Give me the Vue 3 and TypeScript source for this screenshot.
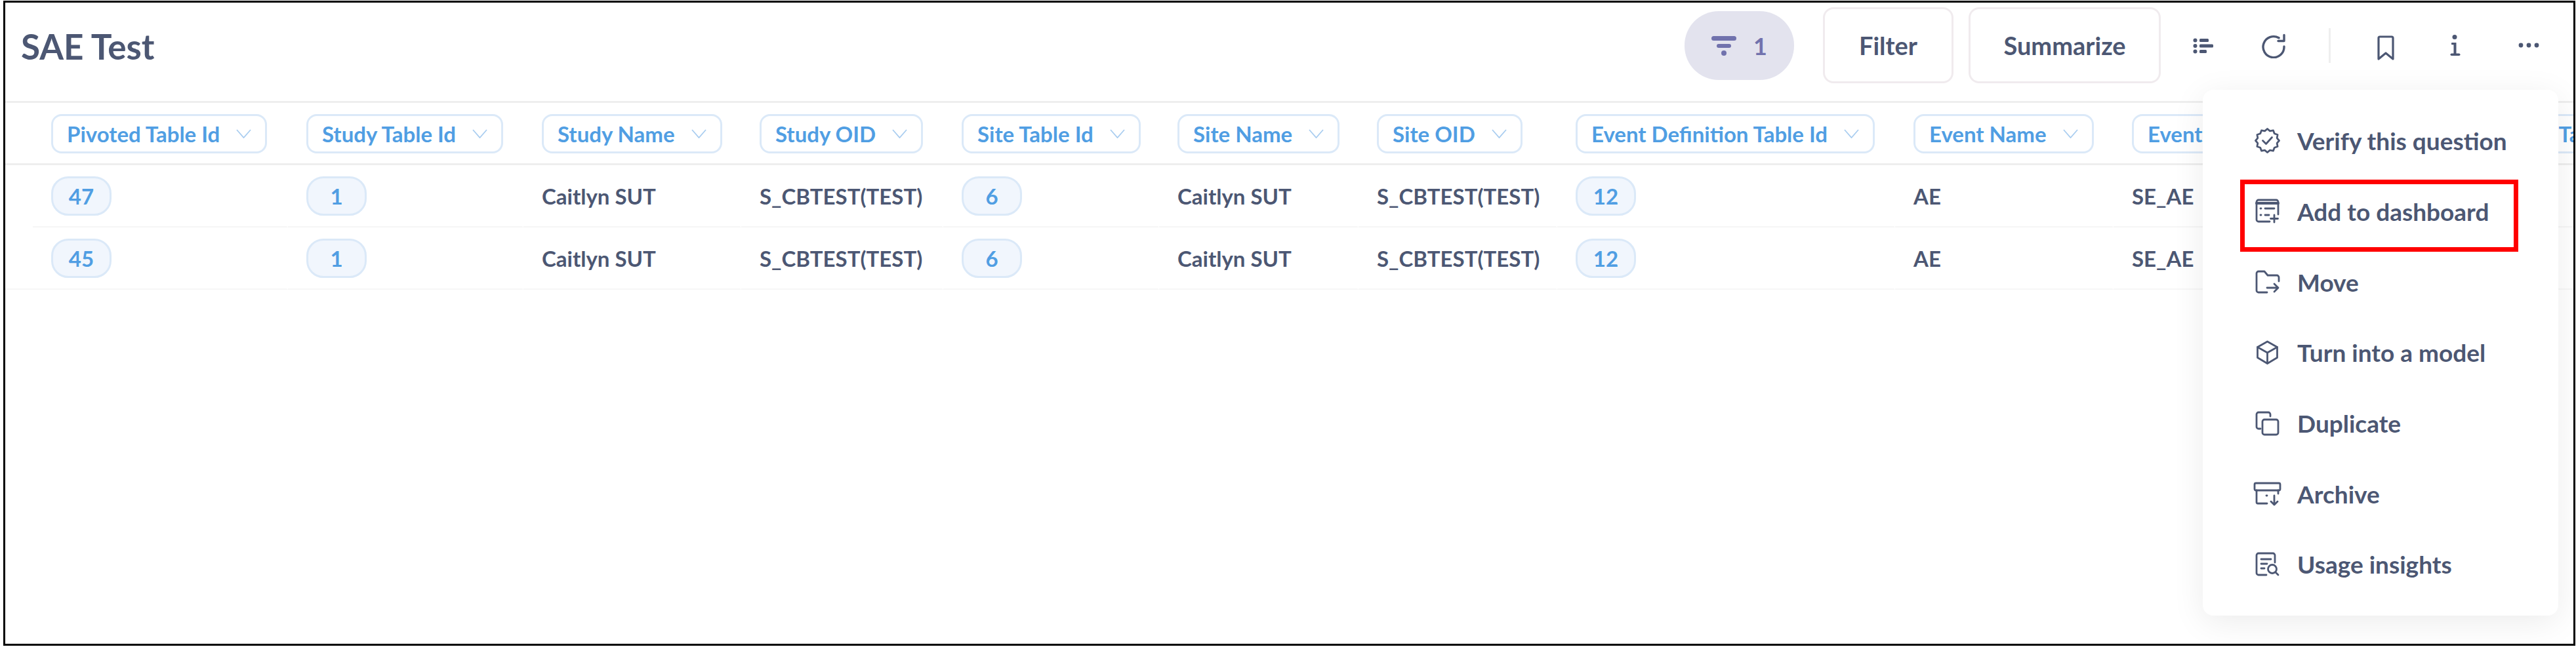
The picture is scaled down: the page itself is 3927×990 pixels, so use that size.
<script setup lang="ts">
interface Column {
  label: string
  tail?: string
  width: number
  kind: 'pk' | 'text'
  values: string[]
}

const columns: Column[] = [
  { label: 'Pivoted Table Id', width: 389, kind: 'pk', values: ['47', '45'] },
  { label: 'Study Table Id', width: 359, kind: 'pk', values: ['1', '1'] },
  { label: 'Study Name', width: 332, kind: 'text', values: ['Caitlyn SUT', 'Caitlyn SUT'] },
  { label: 'Study OID', width: 308, kind: 'text', values: ['S_CBTEST(TEST)', 'S_CBTEST(TEST)'] },
  { label: 'Site Table Id', width: 329, kind: 'pk', values: ['6', '6'] },
  { label: 'Site Name', width: 304, kind: 'text', values: ['Caitlyn SUT', 'Caitlyn SUT'] },
  { label: 'Site OID', width: 303, kind: 'text', values: ['S_CBTEST(TEST)', 'S_CBTEST(TEST)'] },
  { label: 'Event Definition Table Id', width: 515, kind: 'pk', values: ['12', '12'] },
  { label: 'Event Name', width: 333, kind: 'text', values: ['AE', 'AE'] },
  // the middle of this label sits behind the menu, only its two ends show
  { label: 'Event', tail: 'Table Id', width: 800, kind: 'text', values: ['SE_AE', 'SE_AE'] }
]

const rows = [0, 1]

const menuItems = [
  { label: 'Verify this question', icon: 'verify' },
  { label: 'Add to dashboard', icon: 'add' },
  { label: 'Move', icon: 'move' },
  { label: 'Turn into a model', icon: 'model' },
  { label: 'Duplicate', icon: 'duplicate' },
  { label: 'Archive', icon: 'archive' },
  { label: 'Usage insights', icon: 'insights' }
]

// scalloped outline of the verified badge
function badgePath(): string {
  const points: string[] = []
  for (let i = 0; i < 24; i++) {
    const r = i % 2 === 0 ? 18 : 15.2
    const a = (i * Math.PI) / 12
    points.push(`${(18.5 + r * Math.sin(a)).toFixed(2)} ${(18.5 - r * Math.cos(a)).toFixed(2)}`)
  }
  return `M${points.join('L')}z`
}

const badge = badgePath()
</script>

<template>
  <div class="frame">
    <header class="topbar">
      <h1 class="title">SAE Test</h1>
      <div class="actions">
        <button class="filter-count">
          <svg width="38" height="30" viewBox="0 0 38 30" fill="#7172ad">
            <rect x="0" y="0" width="38" height="7" rx="3.5" />
            <rect x="8" y="12" width="22" height="6" rx="3" />
            <circle cx="19" cy="26" r="4" />
          </svg>
          <span>1</span>
        </button>
        <button class="btn btn-filter">Filter</button>
        <button class="btn btn-summarize">Summarize</button>
        <svg class="tool tool-list" width="32" height="24" viewBox="0 0 32 24" fill="#4c5773">
          <circle cx="3.5" cy="3.5" r="3" />
          <circle cx="3.5" cy="12" r="3" />
          <circle cx="3.5" cy="20.5" r="3" />
          <rect x="10" y="1" width="14" height="5" rx="1.5" />
          <rect x="10" y="9.5" width="21" height="5" rx="1.5" />
          <rect x="10" y="18" width="11" height="5" rx="1.5" />
        </svg>
        <svg class="tool tool-refresh" width="36" height="38" viewBox="0 0 36 38" fill="none" stroke="#4c5773" stroke-width="3.4" stroke-linecap="round" stroke-linejoin="round">
          <path d="M34 20a16 16 0 1 1-8-13.2" />
          <path d="M34 2.5v9h-9" />
        </svg>
        <span class="divider"></span>
        <svg class="tool tool-bookmark" width="26" height="38" viewBox="0 0 26 38" fill="none" stroke="#4c5773" stroke-width="3.2" stroke-linejoin="round">
          <path d="M2 4a2 2 0 0 1 2-2h18a2 2 0 0 1 2 2v32l-11-9-11 9z" />
        </svg>
        <svg class="tool tool-info" width="16" height="33" viewBox="0 0 16 33" fill="#4c5773">
          <circle cx="7" cy="3.5" r="3.5" />
          <rect x="5.5" y="12" width="4" height="18" />
          <rect x="2" y="12" width="6" height="3.2" rx="1" />
          <rect x="0.5" y="28.5" width="15" height="3.6" rx="1.8" />
        </svg>
        <svg class="tool tool-dots" width="32" height="8" viewBox="0 0 32 8" fill="#4c5773">
          <circle cx="4" cy="4" r="3.4" />
          <circle cx="16" cy="4" r="3.4" />
          <circle cx="28" cy="4" r="3.4" />
        </svg>
      </div>
    </header>

    <div class="table">
      <div class="head-row">
        <div class="gutter"></div>
        <div v-for="col in columns" :key="col.label" class="head-cell" :style="{ flexBasis: col.width + 'px' }">
          <div class="head-pill">
            <span>{{ col.label }}</span>
            <span v-if="col.tail" class="head-tail">{{ col.tail }}</span>
            <svg v-else width="23" height="14" viewBox="0 0 23 14" fill="none" stroke="#a9cdf0" stroke-width="1.8">
              <path d="M1 1l10.5 12L22 1" />
            </svg>
          </div>
        </div>
      </div>
      <div v-for="r in rows" :key="r" class="row">
        <div class="gutter" :class="{ lined: r === 1 }"></div>
        <div v-for="col in columns" :key="col.label" class="cell" :style="{ flexBasis: col.width + 'px' }">
          <span v-if="col.kind === 'pk'" class="pk">{{ col.values[r] }}</span>
          <span v-else>{{ col.values[r] }}</span>
        </div>
      </div>
    </div>

    <div class="menu">
      <div v-for="item in menuItems" :key="item.label" class="menu-item">
        <svg class="menu-icon" width="37" height="37" viewBox="0 0 37 37" fill="none" stroke="#4c5773" stroke-width="2.8" stroke-linecap="round" stroke-linejoin="round">
          <template v-if="item.icon === 'verify'">
            <path :d="badge" />
            <path d="M11.5 18.5l5 5 9-10" />
          </template>
          <template v-else-if="item.icon === 'add'">
            <path d="M22 34H5a3 3 0 0 1-3-3V4a3 3 0 0 1 3-3h27a3 3 0 0 1 3 3v19" />
            <path d="M2 6h33" stroke-width="4" />
            <path d="M8 14h1M15 14h14M8 24h1M15 24h6M29 24v11M23.5 29.500h11" />
          </template>
          <template v-else-if="item.icon === 'move'">
            <path d="M18 34H5a3 3 0 0 1-3-3V5a3 3 0 0 1 3-3h9l5 6h14a3 3 0 0 1 3 3v6" />
            <path d="M18 27h17M29 21l6 6-6 6" />
          </template>
          <template v-else-if="item.icon === 'model'">
            <path d="M18.500 2l15 8.500v16l-15 9-15-9v-16z" />
            <path d="M3.500 10.500l15 8.500 15-8.500M18.500 19v16" />
          </template>
          <template v-else-if="item.icon === 'duplicate'">
            <path d="M8 27H5a3 3 0 0 1-3-3V5a3 3 0 0 1 3-3h15a3 3 0 0 1 3 3v3" />
            <rect x="11" y="13" width="24" height="23" rx="3" />
          </template>
          <template v-else-if="item.icon === 'archive'">
            <rect x="-1" y="2" width="39" height="11" rx="2" />
            <path d="M2 13v18a2 2 0 0 0 2 2h14M35 13v5M17 21h1M29 21v14M24 30l5 5 5-5" />
          </template>
          <template v-else-if="item.icon === 'insights'">
            <path d="M17 35H5a3 3 0 0 1-3-3V5a3 3 0 0 1 3-3h22a3 3 0 0 1 3 3v11" />
            <path d="M9 11h15M9 18h9M9 25h5" />
            <circle cx="26" cy="26" r="6.500" />
            <path d="M31 31l4 4" />
          </template>
        </svg>
        <span>{{ item.label }}</span>
      </div>
    </div>
    <div class="highlight"></div>
  </div>
</template>

<style>
html,
body {
  margin: 0;
  background: #fff;
}
</style>

<style scoped>
.frame {
  position: relative;
  box-sizing: border-box;
  width: 3921px;
  height: 984px;
  margin: 1px 0 0 5px;
  overflow: hidden;
  background: #fff;
  border: 3px solid #000;
  font-family: Lato, "Noto Sans", sans-serif;
  font-weight: 700;
  color: #4c5773;
}

.topbar {
  display: flex;
  align-items: flex-start;
  height: 150px;
  border-bottom: 3px solid #eeeeee;
}

.title {
  margin: 37px 0 0 24px;
  font-size: 53px;
  line-height: 60px;
  font-weight: 700;
}

.actions {
  display: flex;
  align-items: flex-start;
  margin-left: auto;
  margin-right: 52px;
}

.filter-count {
  display: flex;
  align-items: center;
  justify-content: center;
  gap: 26px;
  width: 167px;
  height: 105px;
  margin-top: 13px;
  padding: 0;
  border: none;
  border-radius: 52px;
  background: #e3e3ee;
  color: #7172ad;
  font: 700 36px Lato, sans-serif;
}

.btn {
  box-sizing: border-box;
  height: 116px;
  margin-top: 7px;
  padding: 0;
  border: 3px solid #f0ebee;
  border-radius: 16px;
  background: #fff;
  color: #4c5773;
  font: 700 38px Lato, sans-serif;
}

.btn-filter {
  width: 199px;
  margin-left: 44px;
}

.btn-summarize {
  width: 293px;
  margin-left: 23px;
}

.tool {
  flex: none;
}

.tool-list {
  margin: 54px 0 0 49px;
}

.tool-refresh {
  margin: 47px 0 0 73px;
}

.divider {
  width: 3px;
  height: 53px;
  margin: 39px 0 0 66px;
  background: #eeeeee;
}

.tool-bookmark {
  margin: 50px 0 0 71px;
}

.tool-info {
  margin: 49px 0 0 85px;
}

.tool-dots {
  margin: 61px 0 0 88px;
}

.table {
  overflow: hidden;
}

.head-row,
.row {
  display: flex;
}

.gutter {
  flex: none;
  width: 42px;
  border-bottom: 2px solid transparent;
}

.head-row {
  height: 92px;
  border-bottom: 3px solid #eeeeee;
}

.head-cell,
.cell {
  flex: none;
  box-sizing: border-box;
  padding-left: 28px;
}

.head-cell {
  padding-top: 17px;
}

.head-pill {
  display: inline-flex;
  align-items: center;
  gap: 25px;
  box-sizing: border-box;
  height: 60px;
  padding: 0 21px;
  border: 3px solid #dbe9f8;
  border-radius: 16px;
  color: #509ee3;
  font-size: 33px;
  white-space: nowrap;
}

.head-tail {
  margin-left: 518px;
}

.row {
  height: 95px;
}

.cell {
  display: flex;
  align-items: center;
  height: 95px;
  border-bottom: 2px solid #f6f6f6;
  border-right: 2px solid #fff;
  font-size: 33px;
  white-space: nowrap;
}

.lined {
  border-bottom: 2px solid #f6f6f6;
}

.pk {
  box-sizing: border-box;
  display: flex;
  align-items: center;
  justify-content: center;
  width: 92px;
  height: 60px;
  border: 3px solid #dbe9f8;
  border-radius: 26px;
  background: #f1f6fd;
  color: #509ee3;
}

.menu {
  position: absolute;
  top: 133px;
  left: 3350px;
  box-sizing: border-box;
  width: 542px;
  height: 802px;
  padding: 24px 0 0 80px;
  border-radius: 16px;
  background: #fff;
  box-shadow: 0 10px 50px rgba(0, 0, 0, 0.08);
}

.menu-item {
  display: flex;
  align-items: center;
  gap: 27px;
  height: 107.700px;
  font-size: 37px;
  white-space: nowrap;
}

.menu-icon {
  flex: none;
  overflow: visible;
}

.highlight {
  position: absolute;
  top: 270px;
  left: 3407px;
  box-sizing: border-box;
  width: 424px;
  height: 110px;
  border: 7px solid #ff0000;
}
</style>
